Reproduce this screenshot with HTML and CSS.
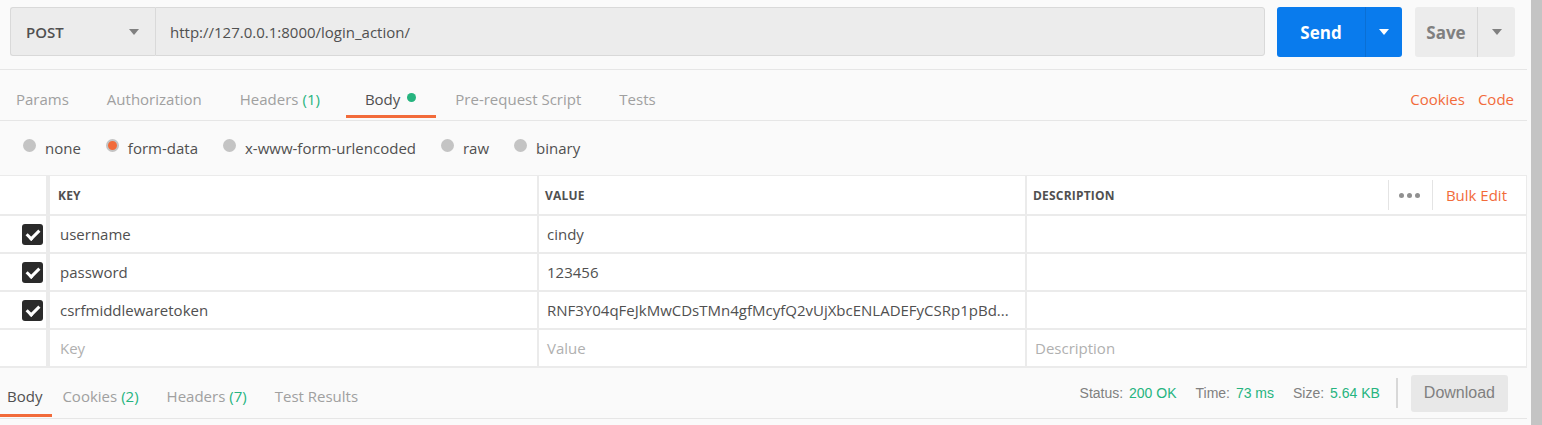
FILE: index.html
```html
<!doctype html>
<html>
  <head>
    <title>Request Builder</title>
    <meta charset="utf-8"/>
    <link rel="stylesheet" href="styles.css">
  </head>
  <body>
    <div class="app">
      <div class="main">
        <div class="urlbar">
          <div class="method">POST<span class="caret"></span></div>
          <div class="url">http://127.0.0.1:8000/login_action/</div>
          <div class="send"><span class="lbl">Send</span><span class="drop"><span class="caret white"></span></span></div>
          <div class="save"><span class="lbl">Save</span><span class="drop"><span class="caret"></span></span></div>
        </div>

        <div class="tabs">
          <span class="tab">Params</span>
          <span class="tab">Authorization</span>
          <span class="tab">Headers <em>(1)</em></span>
          <span class="tab on">Body <i class="dot"></i></span>
          <span class="tab">Pre-request Script</span>
          <span class="tab">Tests</span>
          <span class="links"><a>Cookies</a><a>Code</a></span>
        </div>

        <div class="radios">
          <label><i class="radio"></i>none</label>
          <label><i class="radio checked"></i>form-data</label>
          <label><i class="radio"></i>x-www-form-urlencoded</label>
          <label><i class="radio"></i>raw</label>
          <label><i class="radio"></i>binary</label>
        </div>

        <div class="grid">
          <div class="cell chk"></div>
          <div class="cell key head">KEY</div>
          <div class="cell val head">VALUE</div>
          <div class="cell desc head">DESCRIPTION
            <span class="tools"><span class="more"><i></i><i></i><i></i></span><a>Bulk Edit</a></span>
          </div>

          <div class="cell chk"><span class="box"></span></div>
          <div class="cell key">username</div>
          <div class="cell val">cindy</div>
          <div class="cell desc"></div>

          <div class="cell chk"><span class="box"></span></div>
          <div class="cell key">password</div>
          <div class="cell val">123456</div>
          <div class="cell desc"></div>

          <div class="cell chk"><span class="box"></span></div>
          <div class="cell key">csrfmiddlewaretoken</div>
          <div class="cell val">RNF3Y04qFeJkMwCDsTMn4gfMcyfQ2vUjXbcENLADEFyCSRp1pBd...</div>
          <div class="cell desc"></div>

          <div class="cell chk"></div>
          <div class="cell key ph">Key</div>
          <div class="cell val ph">Value</div>
          <div class="cell desc ph">Description</div>
        </div>

        <div class="restabs">
          <span class="tab on">Body</span>
          <span class="tab">Cookies <em>(2)</em></span>
          <span class="tab">Headers <em>(7)</em></span>
          <span class="tab">Test Results</span>
          <span class="meta">
            <span>Status: <b>200 OK</b></span>
            <span>Time: <b>73 ms</b></span>
            <span>Size: <b>5.64 KB</b></span>
            <span class="sep"></span>
            <span class="dl">Download</span>
          </span>
        </div>
      </div>
      <div class="scroll"></div>
    </div>
  </body>
</html>
```

FILE: styles.css
```css
*{
  box-sizing:border-box;
}
html,body{
  margin:0;
  padding:0;
  background:#fafafa;
  font-family:"Open Sans",sans-serif;
  font-size:15px;
  color:#505050;
}
.app{
  display:flex;
  height:425px;
  overflow:hidden;
}
.main{
  width:1527px;
}
.scroll{
  width:11px;
  margin-left:4px;
  background:#c4c4c4;
}

/* url bar */
.urlbar{
  display:flex;
  align-items:flex-start;
  height:70px;
  padding:7px 12px 0 10px;
  border-bottom:1px solid #e6e6e6;
}
.method{
  width:145px;
  height:49px;
  display:flex;
  align-items:center;
  justify-content:space-between;
  padding:0 16px 0 15px;
  background:#ececec;
  border:1px solid #d9d9d9;
  border-right:none;
  border-radius:3px 0 0 3px;
  font-weight:600;
  color:#505050;
}
.url{
  width:1110px;
  height:49px;
  display:flex;
  align-items:center;
  padding-left:14px;
  background:#ececec;
  border:1px solid #d9d9d9;
  border-radius:0 3px 3px 0;
}
.caret{
  width:0;
  height:0;
  border-left:5px solid transparent;
  border-right:5px solid transparent;
  border-top:6px solid #808080;
}
.caret.white{
  border-top-color:#fff;
}
.send,.save{
  display:flex;
  height:50px;
  border-radius:3px;
  font-size:17px;
  font-weight:700;
}
.send{
  width:125px;
  margin-left:12px;
  background:#097bed;
  color:#fff;
}
.save{
  width:100px;
  margin-left:13px;
  background:#ececec;
  color:#808080;
}
.send .lbl,.save .lbl{
  flex:1;
  display:flex;
  align-items:center;
  justify-content:center;
}
.drop{
  display:flex;
  align-items:center;
  justify-content:center;
}
.send .drop{
  width:37px;
  border-left:1px solid #0a6fd4;
}
.save .drop{
  width:38px;
  border-left:1px solid #d8d8d8;
}

/* request tabs */
.tabs{
  display:flex;
  align-items:stretch;
  height:51px;
  padding-top:7px;
  border-bottom:1px solid #e6e6e6;
  margin-left:-3px;
}
.tab{
  display:flex;
  align-items:center;
  padding:0 19px;
  color:#a0a0a0;
  position:relative;
}
.tab em{
  font-style:normal;
  color:#26b47f;
  margin-left:4px;
}
.tab.on{
  color:#505050;
}
.tabs .tab.on{
  margin-left:7px;
  padding-right:20px;
}
.tabs .tab.on::after{
  content:"";
  position:absolute;
  left:0;
  right:0;
  bottom:2px;
  height:3px;
  background:#f26b3a;
}
.dot{
  width:9px;
  height:9px;
  border-radius:50%;
  background:#26b47f;
  margin-left:7px;
  margin-top:-2px;
}
.links{
  margin-left:auto;
  display:flex;
  align-items:center;
  gap:13px;
  padding-right:13px;
}
.links a,.tools a{
  color:#f26b3a;
}

/* body type */
.radios{
  display:flex;
  align-items:center;
  height:54px;
  padding-left:23px;
  gap:25px;
}
.radios label{
  display:flex;
  align-items:center;
  color:#505050;
}
.radio{
  width:13px;
  height:13px;
  border-radius:50%;
  background:#c4c4c4;
  margin-right:9px;
  margin-top:-5px;
}
.radio.checked{
  background:#f26b3a;
  border:2px solid #c4c4c4;
}

/* key value table */
.grid{
  display:grid;
  grid-template-columns:46px 491px 488px 1fr;
  grid-auto-rows:38px;
  background:#fff;
  border-top:1px solid #ebebeb;
  border-bottom:2px solid #ebebeb;
  border-right:1px solid #ebebeb;
}
.cell{
  display:flex;
  align-items:center;
  border-top:2px solid #ebebeb;
  white-space:nowrap;
  overflow:hidden;
}
.grid .cell:nth-child(-n+4){
  border-top:none;
}
.chk{
  justify-content:flex-end;
  padding-right:3px;
}
.key{
  border-left:4px solid #ebebeb;
  padding-left:10px;
}
.val,.desc{
  border-left:2px solid #ebebeb;
  padding-left:8px;
}
.head{
  font-size:12px;
  font-weight:700;
  letter-spacing:0.2px;
  padding-left:8px;
  color:#505050;
}
.val.head,.desc.head{
  padding-left:6px;
}
.ph{
  color:#b0b0b0;
}
.box{
  width:21px;
  height:21px;
  border-radius:3px;
  background:#2a2a2a;
  position:relative;
}
.box::after{
  content:"";
  position:absolute;
  left:7px;
  top:3px;
  width:5px;
  height:10px;
  border:solid #fff;
  border-width:0 3px 3px 0;
  transform:rotate(45deg);
}
.tools{
  margin-left:auto;
  display:flex;
  align-items:center;
  height:30px;
  font-size:15px;
  font-weight:400;
  letter-spacing:0;
}
.more{
  display:flex;
  gap:3px;
  height:30px;
  align-items:center;
  padding:0 12px 0 10px;
  border-left:1px solid #e4e4e4;
  border-right:1px solid #e4e4e4;
}
.more i{
  width:5px;
  height:5px;
  border-radius:50%;
  background:#909090;
}
.tools a{
  padding:0 19px 0 13px;
}

/* response tabs */
.restabs{
  display:flex;
  align-items:stretch;
  height:51px;
  border-bottom:1px solid #e6e6e6;
}
.restabs .tab{
  padding:6px 14px 0;
}
.restabs .tab:first-child{
  padding:6px 10px 0 7px;
}
.restabs .tab:nth-child(2){
  margin-left:-4px;
}
.restabs .tab.on::after{
  content:"";
  position:absolute;
  left:0;
  right:0;
  bottom:1px;
  height:3px;
  background:#f26b3a;
}
.meta{
  margin-left:auto;
  display:flex;
  align-items:center;
  padding-right:19px;
  font-family:"Liberation Sans",Arial,sans-serif;
  font-size:14px;
  color:#808080;
  gap:19px;
}
.meta b{
  font-weight:400;
  color:#26b47f;
  margin-left:2px;
}
.sep{
  width:2px;
  height:30px;
  margin-left:-3px;
  background:#d8d8d8;
}
.dl{
  display:flex;
  align-items:center;
  height:37px;
  padding:0 13px;
  background:#e8e8e8;
  border-radius:3px;
  font-size:16px;
  margin-left:-6px;
}
```
